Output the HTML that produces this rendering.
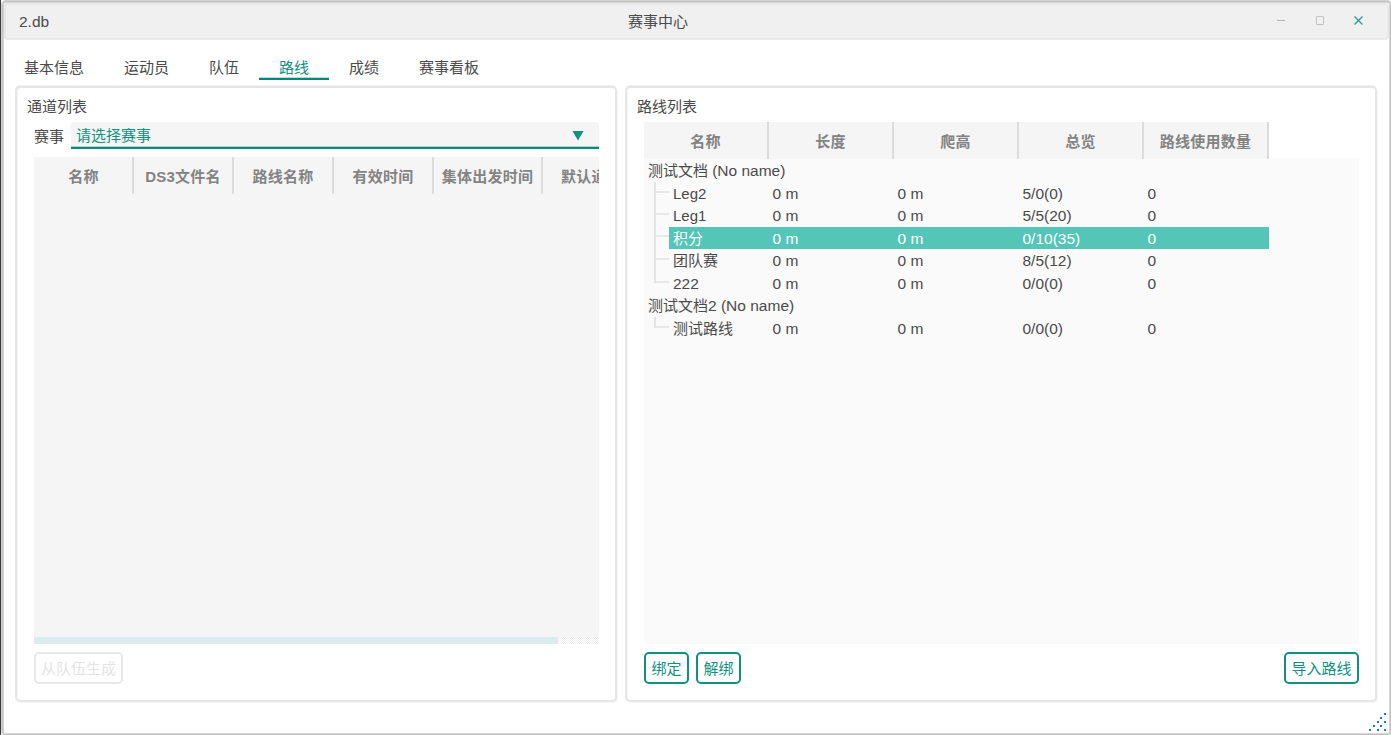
<!DOCTYPE html>
<html lang="zh-CN">
<head>
<meta charset="utf-8">
<title>赛事中心</title>
<style>
html,body{margin:0;padding:0;}
body{width:1391px;height:735px;position:relative;overflow:hidden;background:#fff;
  font-family:"Liberation Sans","Noto Sans CJK SC",sans-serif;font-size:15px;color:#4a4a4a;}
.abs{position:absolute;}
.t{position:absolute;white-space:nowrap;line-height:22px;height:22px;margin-top:1px;}
.l{font-size:15.5px;}
.n{font-size:15px;}
#edge{left:0;top:0;width:1px;height:735px;background:#3c3c3c;}
#win{left:2px;top:1px;width:1387px;height:732px;border:1px solid #c0c0c0;border-radius:4px;background:#fff;box-shadow:0 0 0 1px #d3d3d3, inset 0 0 0 1px #d6d6d6;}
#title{left:4px;top:3px;width:1385px;height:37px;background:#f0f0f0;border:2px solid #e8e8e8;border-radius:4px;box-sizing:border-box;}
.tab{color:#4a4a4a;}
.tab.on{color:#12917f;}
.panel{border:2px solid #e6e6e6;border-radius:5px;background:#fff;box-sizing:border-box;box-shadow:0 -1px 0 0 #f1f1f1, 1px 1px 0 0 #f6f6f6, inset 1px 0 0 0 #f3f3f3;}
.hd{position:absolute;top:0;height:37px;line-height:37px;text-align:center;font-weight:bold;color:#838383;letter-spacing:0.25px;white-space:nowrap;overflow:hidden;}
.hd{line-height:39px !important;}
.sep{position:absolute;top:0;width:2px;height:37px;background:#dcdcdc;}
.btn{position:absolute;box-sizing:border-box;height:32px;border:2px solid #10917f;border-radius:5px;color:#10917f;text-align:center;line-height:30px;background:#fff;white-space:nowrap;}
.row{position:absolute;left:0;height:22px;line-height:22px;white-space:nowrap;margin-top:1px;}
.c{position:absolute;top:0;}
.vl{position:absolute;width:2px;background:#e4e4e4;}
.hl{position:absolute;height:2px;background:#e8e8e8;}
.dot{position:absolute;width:2px;height:2px;background:#1a8a7c;}
</style>
</head>
<body>
<div id="edge" class="abs"></div>
<div id="win" class="abs"></div>
<div id="title" class="abs"></div>
<div class="t" style="left:19px;top:10px;"><span class="l">2.db</span></div>
<div class="t" style="left:628px;top:10px;">赛事中心</div>

<!-- window buttons -->
<svg class="abs" style="left:1270px;top:8px;" width="100" height="24" viewBox="0 0 100 24">
  <line x1="7" y1="12.5" x2="15" y2="12.5" stroke="#b4b4b4" stroke-width="1"/>
  <rect x="46.5" y="8.5" width="7" height="8" rx="0.5" fill="none" stroke="#c4c4c4" stroke-width="1"/>
  <path d="M84.5 8.5 L92.5 16.5 M92.5 8.5 L84.5 16.5" stroke="#2a9d8f" stroke-width="1.25" fill="none"/>
</svg>

<!-- tabs -->
<div class="t tab" style="left:24px;top:56px;">基本信息</div>
<div class="t tab" style="left:124px;top:56px;">运动员</div>
<div class="t tab" style="left:209px;top:56px;">队伍</div>
<div class="t tab on" style="left:279px;top:56px;">路线</div>
<div class="t tab" style="left:349px;top:56px;">成绩</div>
<div class="t tab" style="left:419px;top:56px;">赛事看板</div>
<div class="abs" style="left:259px;top:77px;width:70px;height:1px;background:#b5ddd7;"></div><div class="abs" style="left:259px;top:78px;width:70px;height:2px;background:#0a8676;"></div>

<!-- left panel -->
<div class="abs panel" style="left:15px;top:86px;width:602px;height:616px;"></div>
<div class="t" style="left:27px;top:95px;">通道列表</div>
<div class="t" style="left:34px;top:125px;">赛事</div>
<div class="abs" style="left:71px;top:122px;width:528px;height:27px;background:#f5f5f5;border-radius:4px 4px 0 0;border-bottom:2px solid #0f8878;box-shadow:inset 0 -1px 0 0 #a9d6cf;box-sizing:border-box;"></div>
<div class="t" style="left:76px;top:124px;color:#12917f;">请选择赛事</div>
<svg class="abs" style="left:572px;top:130px;" width="12" height="11" viewBox="0 0 12 11"><path d="M0.5 1 L11.5 1 L6 10.5 Z" fill="#12917f"/></svg>

<div class="abs lt" style="left:34px;top:157px;width:565px;height:480px;background:#f5f5f5;overflow:hidden;">
  <div class="hd" style="left:0;width:99px;">名称</div><div class="sep" style="left:98px;"></div>
  <div class="hd" style="left:100px;width:98px;"><span class="n">DS3</span>文件名</div><div class="sep" style="left:198px;"></div>
  <div class="hd" style="left:200px;width:98px;">路线名称</div><div class="sep" style="left:298px;"></div>
  <div class="hd" style="left:300px;width:98px;">有效时间</div><div class="sep" style="left:398px;"></div>
  <div class="hd" style="left:400px;width:107px;">集体出发时间</div><div class="sep" style="left:507px;"></div>
  <div class="hd" style="left:527px;width:60px;text-align:left;">默认通道</div>
</div>
<div class="abs" style="left:34px;top:637px;width:524px;height:7px;background:#dcebeb;"></div>
<div class="abs" style="left:558px;top:637px;width:41px;height:7px;background:conic-gradient(#ededed 25%,#fff 0 50%,#ededed 0 75%,#fff 0) 0 0/2px 2px;"></div>
<div class="btn" style="left:34px;top:652px;width:89px;border-color:#e8e8e8;color:#e4e4e4;">从队伍生成</div>

<!-- right panel -->
<div class="abs panel" style="left:625px;top:86px;width:752px;height:616px;"></div>
<div class="t" style="left:637px;top:95px;">路线列表</div>
<div class="abs" style="left:644px;top:122px;width:625px;height:37px;background:#f5f5f5;">
  <div class="hd" style="left:0;width:123px;">名称</div><div class="sep" style="left:123px;"></div>
  <div class="hd" style="left:125px;width:123px;">长度</div><div class="sep" style="left:248px;"></div>
  <div class="hd" style="left:250px;width:123px;">爬高</div><div class="sep" style="left:373px;"></div>
  <div class="hd" style="left:375px;width:123px;">总览</div><div class="sep" style="left:498px;"></div>
  <div class="hd" style="left:500px;width:123px;">路线使用数量</div><div class="sep" style="left:623px;"></div>
</div>
<div class="abs" id="tree" style="left:644px;top:159px;width:715px;height:485px;background:#fafafa;">
  <div class="abs" style="left:25px;top:68px;width:600px;height:22px;background:#55c5b8;"></div>
  <div class="vl" style="left:10px;top:23px;height:101px;"></div>
  <div class="hl" style="left:12px;top:32px;width:13px;"></div>
  <div class="hl" style="left:12px;top:54px;width:13px;"></div>
  <div class="hl" style="left:12px;top:76px;width:13px;"></div>
  <div class="hl" style="left:12px;top:99px;width:13px;"></div>
  <div class="hl" style="left:12px;top:122px;width:13px;"></div>
  <div class="vl" style="left:10px;top:158px;height:11px;"></div>
  <div class="hl" style="left:12px;top:167px;width:13px;"></div>

  <div class="row" style="top:0px;"><span class="c" style="left:4px;">测试文档 <span class="l">(No name)</span></span></div>
  <div class="row l" style="top:23px;"><span class="c n" style="left:29px;">Leg2</span><span class="c" style="left:128.5px;">0 m</span><span class="c" style="left:253.5px;">0 m</span><span class="c" style="left:378.5px;">5/0(0)</span><span class="c" style="left:503.5px;">0</span></div>
  <div class="row l" style="top:45px;"><span class="c n" style="left:29px;">Leg1</span><span class="c" style="left:128.5px;">0 m</span><span class="c" style="left:253.5px;">0 m</span><span class="c" style="left:378.5px;">5/5(20)</span><span class="c" style="left:503.5px;">0</span></div>
  <div class="row l" style="top:68px;color:#fff;"><span class="c" style="left:29px;font-size:15px;">积分</span><span class="c" style="left:128.5px;">0 m</span><span class="c" style="left:253.5px;">0 m</span><span class="c" style="left:378.5px;">0/10(35)</span><span class="c" style="left:503.5px;">0</span></div>
  <div class="row l" style="top:90px;"><span class="c" style="left:29px;font-size:15px;">团队赛</span><span class="c" style="left:128.5px;">0 m</span><span class="c" style="left:253.5px;">0 m</span><span class="c" style="left:378.5px;">8/5(12)</span><span class="c" style="left:503.5px;">0</span></div>
  <div class="row l" style="top:113px;"><span class="c" style="left:29px;">222</span><span class="c" style="left:128.5px;">0 m</span><span class="c" style="left:253.5px;">0 m</span><span class="c" style="left:378.5px;">0/0(0)</span><span class="c" style="left:503.5px;">0</span></div>
  <div class="row" style="top:135px;"><span class="c" style="left:4px;">测试文档<span class="l">2 (No name)</span></span></div>
  <div class="row l" style="top:158px;"><span class="c" style="left:29px;font-size:15px;">测试路线</span><span class="c" style="left:128.5px;">0 m</span><span class="c" style="left:253.5px;">0 m</span><span class="c" style="left:378.5px;">0/0(0)</span><span class="c" style="left:503.5px;">0</span></div>
</div>

<div class="btn" style="left:644px;top:652px;width:45px;">绑定</div>
<div class="btn" style="left:696px;top:652px;width:45px;">解绑</div>
<div class="btn" style="left:1284px;top:652px;width:75px;">导入路线</div>

<!-- size grip -->
<div class="dot" style="left:1384px;top:713px;"></div>
<div class="dot" style="left:1380px;top:717px;"></div>
<div class="dot" style="left:1377px;top:721px;"></div><div class="dot" style="left:1384px;top:721px;"></div>
<div class="dot" style="left:1373px;top:725px;"></div><div class="dot" style="left:1380px;top:725px;"></div>
<div class="dot" style="left:1369px;top:729px;"></div><div class="dot" style="left:1377px;top:729px;"></div><div class="dot" style="left:1384px;top:729px;"></div>
</body>
</html>
